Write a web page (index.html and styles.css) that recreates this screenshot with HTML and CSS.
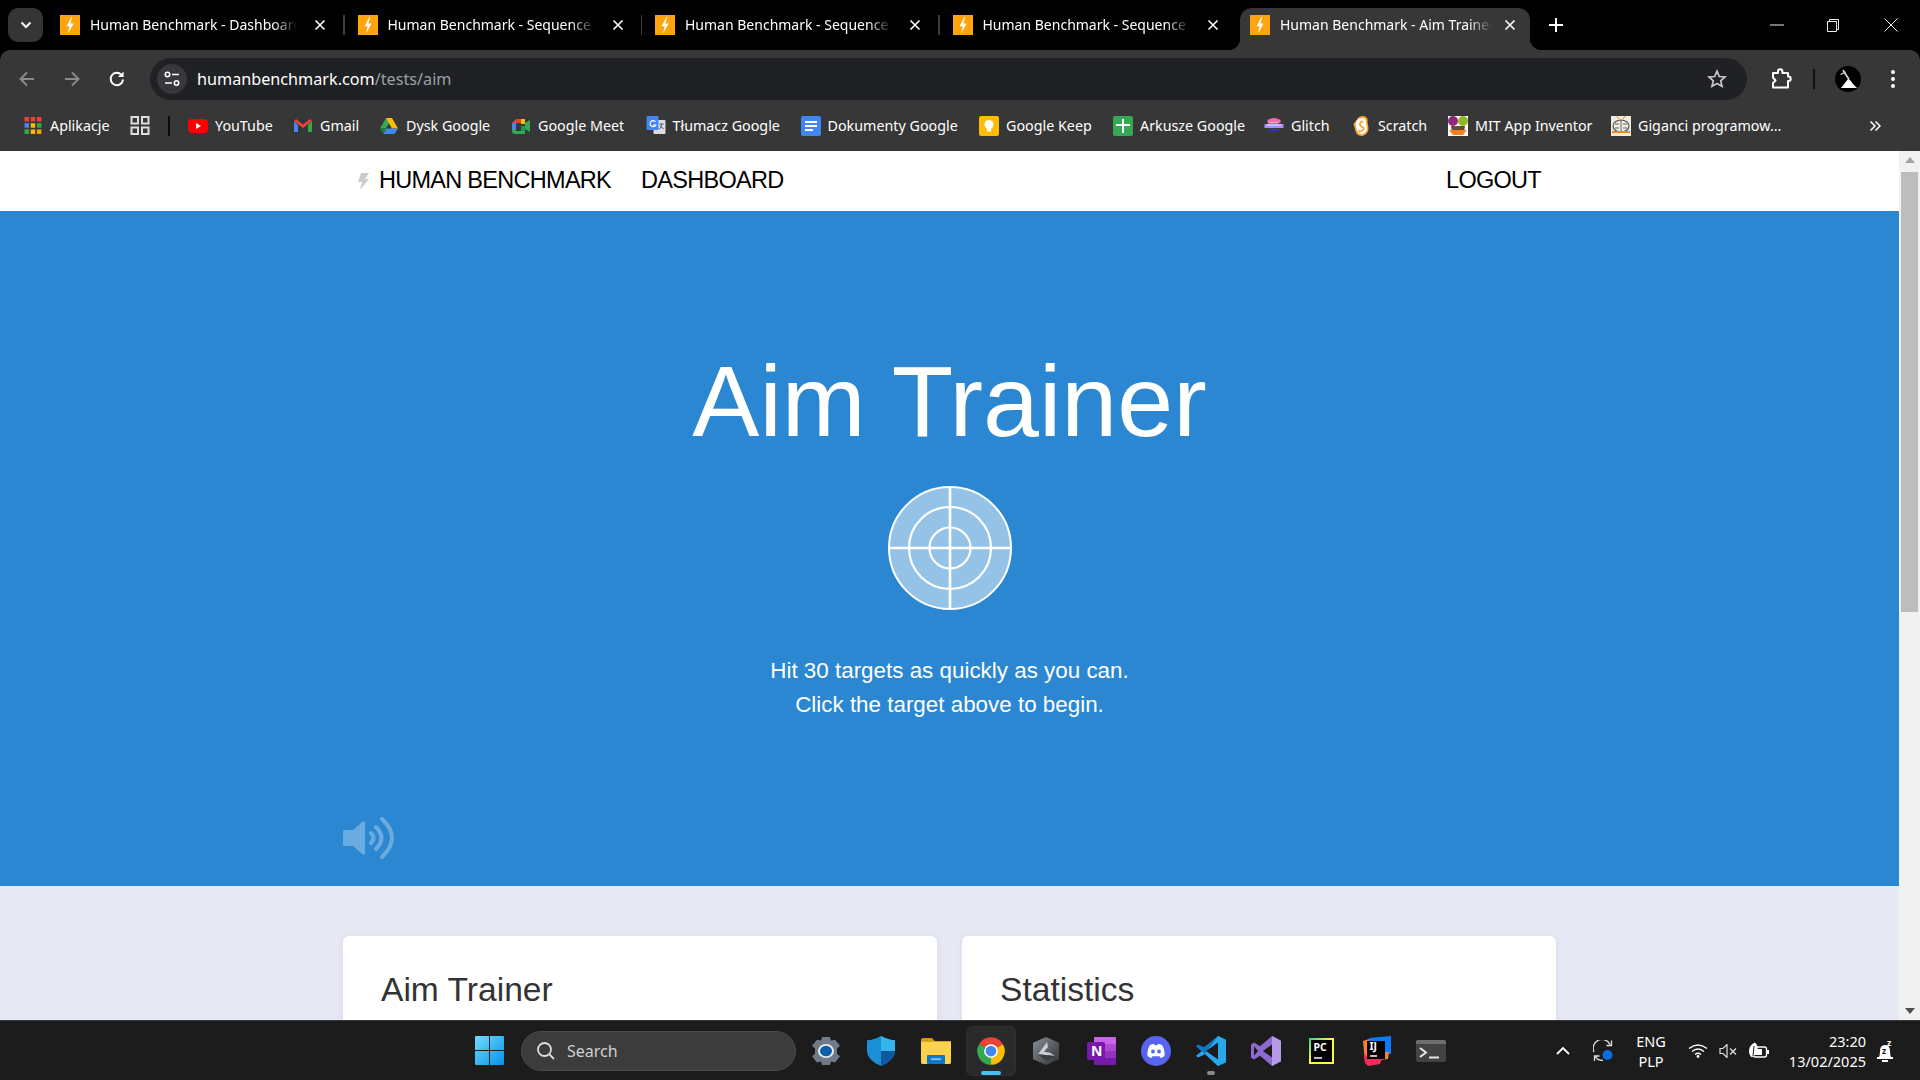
FILE: index.html
```html
<!DOCTYPE html>
<html lang="en">
<head>
<meta charset="utf-8">
<title>Aim Trainer</title>
<link rel="stylesheet" href="styles.css">
</head>
<body>
<svg class="defs" width="0" height="0" aria-hidden="true">
  <defs>
    <symbol id="fav" viewBox="0 0 20 20"><rect width="20" height="20" fill="#ffa40c"/><path d="M11.6 1.8 6.6 11.2h3L8 18.4l5.6-9.9h-3.2l1.8-6.7z" fill="#fff"/></symbol>
    <symbol id="x" viewBox="0 0 12 12"><path d="M1.5 1.5l9 9M10.5 1.5l-9 9" stroke="#fff" stroke-width="1.6" fill="none"/></symbol>
  </defs>
</svg>
<div class="screen">
  <header class="tabstrip">
    <button class="tab-menu"><svg width="12" height="8" viewBox="0 0 12 8"><path d="M1.5 1.5 6 6l4.5-4.5" stroke="#fff" stroke-width="2" fill="none"/></svg></button>
    <div class="tab sep"><svg class="fav"><use href="#fav"/></svg><span class="tab-title">Human Benchmark - Dashboard</span><svg class="tab-x"><use href="#x"/></svg></div>
    <div class="tab sep"><svg class="fav"><use href="#fav"/></svg><span class="tab-title">Human Benchmark - Sequence</span><svg class="tab-x"><use href="#x"/></svg></div>
    <div class="tab sep"><svg class="fav"><use href="#fav"/></svg><span class="tab-title">Human Benchmark - Sequence</span><svg class="tab-x"><use href="#x"/></svg></div>
    <div class="tab"><svg class="fav"><use href="#fav"/></svg><span class="tab-title">Human Benchmark - Sequence</span><svg class="tab-x"><use href="#x"/></svg></div>
    <div class="tab active"><svg class="fav"><use href="#fav"/></svg><span class="tab-title">Human Benchmark - Aim Trainer</span><svg class="tab-x"><use href="#x"/></svg></div>
    <svg class="new-tab" width="14" height="14" viewBox="0 0 14 14"><path d="M7 0v14M0 7h14" stroke="#fff" stroke-width="2"/></svg>
    <div class="winctl">
      <svg width="14" height="14" viewBox="0 0 14 14"><path d="M0 7h14" stroke="#eee" stroke-width="1"/></svg>
      <svg width="14" height="14" viewBox="0 0 14 14"><path d="M1.5 3.5h9v10h-9zM3.5 3.5v-2h9v10h-2" stroke="#eee" stroke-width="1" fill="none"/></svg>
      <svg class="win-close" width="14" height="14" viewBox="0 0 14 14"><path d="M.5.5l13 13M13.5.5l-13 13" stroke="#eee" stroke-width="1" fill="none"/></svg>
    </div>
  </header>

  <div class="toolbar">
    <svg class="nav-btn" width="18" height="18" viewBox="0 0 18 18"><path d="M16 9H3M9 2.5 2.5 9 9 15.5" stroke="#8a8a8a" stroke-width="2" fill="none"/></svg>
    <svg class="nav-btn" width="18" height="18" viewBox="0 0 18 18"><path d="M2 9h13M9 2.5 15.5 9 9 15.5" stroke="#8a8a8a" stroke-width="2" fill="none"/></svg>
    <svg class="nav-btn" width="18" height="18" viewBox="0 0 18 18"><path d="M15 9.5A6.2 6.2 0 1 1 13.2 4.6" stroke="#fff" stroke-width="2" fill="none"/><path d="M15.6 1.5v5.6H10z" fill="#fff"/></svg>
    <div class="omnibox">
      <span class="site-info"><svg width="16" height="16" viewBox="0 0 16 16"><circle cx="3.5" cy="3.5" r="2.2" stroke="#fff" stroke-width="1.6" fill="none"/><path d="M8 3.5h7M1 12h7" stroke="#fff" stroke-width="1.6"/><circle cx="12.5" cy="12" r="2.2" stroke="#fff" stroke-width="1.6" fill="none"/></svg></span>
      <span class="url"><span class="url-host">humanbenchmark.com</span><span class="url-path">/tests/aim</span></span>
      <svg class="star" width="20" height="20" viewBox="0 0 20 20"><path d="M10 2.2l2.3 5.3 5.7.5-4.3 3.8 1.3 5.6L10 14.5l-5 2.9 1.3-5.6L2 8l5.7-.5z" stroke="#c8c8c8" stroke-width="1.7" fill="none"/></svg>
    </div>
    <svg class="ext" width="22" height="22" viewBox="0 0 22 22"><path d="M3 5h5V3.500a2.200 2.200 0 0 1 4.400 0V5H18v3.500h.5a2.200 2.200 0 0 1 0 4.400H18V19.500H3v-4.500l2.500-2.500L3 9.500z" stroke="#fff" stroke-width="2" stroke-linejoin="round" fill="none"/></svg>
    <span class="tb-sep"></span>
    <svg class="avatar" width="26" height="26" viewBox="0 0 26 26"><circle cx="13" cy="13" r="13" fill="#000"/><path d="M8 4l6 9.500" stroke="#ddd" stroke-width="1.600"/><path d="M5.500 8.500l5-2.500" stroke="#ddd" stroke-width="1.200"/><path d="M6 22l4-5 3-4 2 1 3 4 4 4z" fill="#fff"/></svg>
    <svg class="dots" width="4" height="18" viewBox="0 0 4 18"><circle cx="2" cy="2" r="2" fill="#fff"/><circle cx="2" cy="9" r="2" fill="#fff"/><circle cx="2" cy="16" r="2" fill="#fff"/></svg>
  </div>

  <nav class="bookmarks">
    <a class="bm"><svg height="17" viewBox="0 0 17 17"><rect width="4.500" height="4.500" fill="#ea4335"/><rect x="6.200" width="4.500" height="4.500" fill="#ea4335"/><rect x="12.400" width="4.500" height="4.500" fill="#ea4335"/><rect y="6.200" width="4.500" height="4.500" fill="#4285f4"/><rect x="6.200" y="6.200" width="4.500" height="4.500" fill="#fbbc05"/><rect x="12.400" y="6.200" width="4.500" height="4.500" fill="#34a853"/><rect y="12.400" width="4.500" height="4.500" fill="#34a853"/><rect x="6.200" y="12.400" width="4.500" height="4.500" fill="#fbbc05"/><rect x="12.400" y="12.400" width="4.500" height="4.500" fill="#f4a300"/></svg><span>Aplikacje</span></a>
    <a class="bm"><svg height="19" viewBox="0 0 19 19"><path d="M1 1h6.500v6.500H1zM11.500 1H18v6.500h-6.500zM1 11.500h6.500V18H1zM11.500 11.500H18V18h-6.500z" stroke="#ddd" stroke-width="2" fill="none"/></svg></a>
    <span class="bm-sep"></span>
    <a class="bm"><svg height="20" viewBox="0 0 20 20"><rect y="3" width="20" height="14" rx="4" fill="#f00"/><path d="M8 7l5 3-5 3z" fill="#fff"/></svg><span>YouTube</span></a>
    <a class="bm"><svg height="18" viewBox="0 0 18 18"><path d="M0 4v11h4V8z" fill="#4285f4"/><path d="M18 4v11h-4V8z" fill="#34a853"/><path d="M0 4l9 7 9-7-2-2-7 5.500L2 2z" fill="#ea4335"/></svg><span>Gmail</span></a>
    <a class="bm"><svg height="18" viewBox="0 0 18 18"><path d="M6 1h6l-6 10.500H0z" fill="#34a853"/><path d="M6 1h6l6 10.500h-6z" fill="#fbbc05"/><path d="M3.500 17h11L18 11.500H6z" fill="#4285f4"/><path d="M0 11.500 3 17l3.500-5.500z" fill="#188038"/></svg><span>Dysk Google</span></a>
    <a class="bm"><svg height="18" viewBox="0 0 18 18"><path d="M4 2h9v4H4v6H0V6z" fill="#ea4335"/><path d="M0 6h4v6H0z" fill="#4285f4"/><path d="M0 12h4v2h9v3H3q-3 0-3-3z" fill="#34a853"/><path d="M9 2h4v5H9z" fill="#fbbc05"/><path d="M13 6l5-3v12l-5-3z" fill="#34a853"/><path d="M9 14h4v-5H9z" fill="#0f9d58"/></svg><span>Google Meet</span></a>
    <a class="bm"><svg height="19" viewBox="0 0 19 19"><rect x="7" y="4" width="12" height="14" rx="1" fill="#d9dde3"/><rect width="12" height="14" rx="1" fill="#4285f4"/><path d="M9 5.800A3 3 0 1 0 9.300 9H6.500" stroke="#fff" stroke-width="1.200" fill="none"/><path d="M13 8h4M15 8c0 3-1 4-2.500 5M14 10l3 3" stroke="#555" stroke-width="1" fill="none"/></svg><span>Tłumacz Google</span></a>
    <a class="bm"><svg height="20" viewBox="0 0 20 20"><rect width="20" height="20" rx="2" fill="#4285f4"/><path d="M4 5h12v2H4zM4 9h12v2H4zM4 13h8v2H4z" fill="#fff"/></svg><span>Dokumenty Google</span></a>
    <a class="bm"><svg height="20" viewBox="0 0 20 20"><rect width="20" height="20" rx="2" fill="#fbbc05"/><circle cx="10" cy="8.500" r="4.500" fill="#fff"/><rect x="7.800" y="12" width="4.400" height="3.500" fill="#fff"/></svg><span>Google Keep</span></a>
    <a class="bm"><svg height="20" viewBox="0 0 20 20"><rect width="20" height="20" rx="2" fill="#34a853"/><path d="M3 8h14v2H3zM9 3h2v14H9z" fill="#fff"/></svg><span>Arkusze Google</span></a>
    <a class="bm"><svg height="18" viewBox="0 0 19 18"><path d="M3 3q6-4 13 0v3H3z" fill="#f56ba8"/><path d="M0 7h19v4H0z" fill="#a68cff"/><path d="M3 12h13q-6 5-13 0z" fill="#3333cc"/><path d="M2 8h15M4 6h10" stroke="#fff" stroke-width=".8"/></svg><span>Glitch</span></a>
    <a class="bm"><svg height="20" viewBox="0 0 15 20"><path d="M3 4Q5 0 10 0q5 1 4 6l1 6q0 6-6 8-6 0-7-5L0 8z" fill="#f9a63a"/><path d="M3.500 4.500Q5 2 9.500 2q3.500 1 3 5l1 5q0 4.500-4.500 6-4.500 0-5.500-4L2 8z" fill="#fff"/><path d="M10 6Q7 5 6.500 7.500T9 11t-.5 3.500-3-.5" stroke="#f9a63a" stroke-width="1.800" fill="none"/></svg><span>Scratch</span></a>
    <a class="bm"><svg height="20" viewBox="0 0 20 20"><rect width="20" height="20" fill="#fff"/><circle cx="5" cy="5" r="5" fill="#93267f"/><circle cx="15" cy="5" r="5" fill="#8fb82b"/><path d="M3 10h14l-1 7H4z" fill="#6b4a2f"/><path d="M1 14h18l-4 5H5z" fill="#f58220"/></svg><span>MIT App Inventor</span></a>
    <a class="bm"><svg height="20" viewBox="0 0 20 20"><rect width="20" height="20" fill="#efeae2"/><ellipse cx="10" cy="10" rx="8" ry="6" fill="none" stroke="#555" stroke-width="1.200"/><path d="M10 4v12M4 8h4M12 8h4M4 12h4M12 12h4" stroke="#666" stroke-width="1"/><path d="M1 16h18" stroke="#f08a24" stroke-width="2"/><path d="M6 0l2 3M14 0l-2 3" stroke="#f08a24"/></svg><span>Giganci programow...</span></a>
    <svg class="bm-more" width="12" height="12" viewBox="0 0 12 12"><path d="M1.500 1.500 6 6l-4.500 4.500M6.500 1.500 11 6l-4.500 4.500" stroke="#fff" stroke-width="1.500" fill="none"/></svg>
  </nav>

  <div class="viewport">
    <main class="page">
      <div class="sitebar">
        <div class="wrap sitebar-in">
          <svg class="logo" width="11" height="17" viewBox="0 0 11 17"><path d="M3 0h8L7 6h4L2 17l2-8H0z" fill="#ccc"/></svg>
          <a class="sitelink brand">HUMAN BENCHMARK</a>
          <a class="sitelink">DASHBOARD</a>
          <a class="sitelink logout">LOGOUT</a>
        </div>
      </div>
      <section class="hero">
        <h1 class="hero-title">Aim Trainer</h1>
        <svg class="target" width="124" height="124" viewBox="0 0 124 124"><circle cx="62" cy="62" r="61" fill="#fff" fill-opacity=".5" stroke="#fff" stroke-width="2"/><circle cx="62" cy="62" r="41" fill="none" stroke="#fff" stroke-width="2.200"/><circle cx="62" cy="62" r="20.500" fill="none" stroke="#fff" stroke-width="2.200"/><path d="M62 0v124M0 62h124" stroke="#fff" stroke-width="2.600"/></svg>
        <p class="hero-text">Hit 30 targets as quickly as you can.<br>Click the target above to begin.</p>
        <div class="wrap sound-row">
          <svg class="sound" width="51" height="42" viewBox="0 0 51 42"><path d="M1 13h9l10-8.500q2-1 2 1.500v30q0 2.500-2 1.500L10 29H1q-1 0-1-1V14q0-1 1-1z" fill="#fff"/><path d="M28 16q5 5 0 10M33 10q11 11 0 22M39 2q20 19 0 38" stroke="#fff" stroke-width="4" stroke-linecap="round" fill="none"/></svg>
        </div>
      </section>
      <section class="cards">
        <div class="wrap cards-in">
          <article class="card"><h2>Aim Trainer</h2></article>
          <article class="card"><h2>Statistics</h2></article>
        </div>
      </section>
    </main>
    <aside class="scrollbar">
      <span class="arrow up"></span>
      <span class="thumb"></span>
      <span class="arrow down"></span>
    </aside>
  </div>

  <footer class="taskbar">
    <svg class="win" width="29" height="29" viewBox="0 0 29 29"><defs><linearGradient id="wing" x1="0" y1="0" x2="1" y2="1"><stop offset="0" stop-color="#6fdcff"/><stop offset="1" stop-color="#0b8fe6"/></linearGradient></defs><path d="M0 1q0-1 1-1h13v14H0zM15 0h13q1 0 1 1v13H15zM0 15h14v14H1q-1 0-1-1zM15 15h14v13q0 1-1 1H15z" fill="url(#wing)"/></svg>
    <div class="search"><svg width="20" height="20" viewBox="0 0 20 20"><circle cx="8.500" cy="8.500" r="6.500" stroke="#ddd" stroke-width="1.800" fill="none"/><path d="M13.500 13.500 18 18" stroke="#ddd" stroke-width="1.800"/></svg><span>Search</span></div>
    <div class="apps">
      <span class="app"><svg width="30" height="28" viewBox="0 0 30 32" preserveAspectRatio="none"><path d="M11 0h8l1 4 4-1 5 7-3 3v6l3 3-5 7-4-1-1 4h-8l-1-4-4 1-5-7 3-3v-6L1 10l5-7 4 1z" fill="#6f7b88"/><circle cx="15" cy="16" r="8" fill="#e8edf2"/><circle cx="15" cy="16" r="6" fill="#0f5ea8"/></svg></span>
      <span class="app"><svg width="28" height="30" viewBox="0 0 29 36" preserveAspectRatio="none"><path d="M14.500 0Q22 5 29 5v13q0 11-14.500 18Q0 29 0 18V5q7 0 14.500-5z" fill="#1a8fd6"/><path d="M14.500 0Q22 5 29 5v13H14.500z" fill="#36b4ec"/><path d="M14.500 18H29q0 11-14.500 18z" fill="#0e5a9e"/></svg></span>
      <span class="app"><svg width="30" height="26" viewBox="0 0 30 32" preserveAspectRatio="none"><path d="M0 2q0-2 2-2h9l3 4H0z" fill="#d99a00"/><path d="M0 4h30v26q0 2-2 2H2q-2 0-2-2z" fill="#ffd24d"/><path d="M6 22q0-1 1-1h16q1 0 1 1v10H6z" fill="#0d78c9"/><path d="M10 26h10" stroke="#bfe4ff" stroke-width="1.500"/></svg></span>
      <span class="app app-on"><svg width="30" height="30" viewBox="0 0 24 24"><path d="M12 12 2.470 6.500A11 11 0 0 1 21.530 6.500z" fill="#ea4335"/><path d="M12 12 21.530 6.500A11 11 0 0 1 12 23z" fill="#fbbc05"/><path d="M12 12 12 23A11 11 0 0 1 2.470 6.500z" fill="#34a853"/><circle cx="12" cy="12" r="5.500" fill="#fff"/><circle cx="12" cy="12" r="4.300" fill="#4285f4"/></svg><i class="run run-on"></i></span>
      <span class="app"><svg width="26" height="28" viewBox="0 0 26 34" preserveAspectRatio="none"><defs><linearGradient id="hexg" x1="0" y1="0" x2="1" y2="1"><stop offset="0" stop-color="#8a9096"/><stop offset="1" stop-color="#2f3236"/></linearGradient></defs><path d="M13 0l13 7v20l-13 7L0 27V7z" fill="url(#hexg)"/><path d="M14 6 5 21l17 2-5-4-6-1 4-6z" fill="#c9cdd2"/><path d="M5 21l9 8 8-6z" fill="#3a3d41"/></svg></span>
      <span class="app"><svg width="29" height="28" viewBox="0 0 29 28"><path d="M7 1q0-1 1-1h20q1 0 1 1v6H7z" fill="#ca64ea"/><rect x="7" y="7" width="22" height="7" fill="#ae4bd5"/><rect x="7" y="14" width="22" height="7" fill="#9332bf"/><path d="M7 21h22v6q0 1-1 1H8q-1 0-1-1z" fill="#7719aa"/><rect y="5" width="18" height="18" rx="2" fill="#7719aa"/><text x="4" y="19" class="app-n">N</text></svg></span>
      <span class="app"><svg width="30" height="30" viewBox="0 0 30 30"><circle cx="15" cy="15" r="15" fill="#5865f2"/><path d="M9 9q3-1.500 4-1l.7 1.300h2.600L17 8q1-.5 4 1 3 5 2.600 11-2 1.600-4 2l-1-1.700h-7.200l-1 1.700q-2-.4-4-2Q6 14 9 9z" fill="#fff"/><circle cx="12" cy="15.500" r="1.900" fill="#5865f2"/><circle cx="18" cy="15.500" r="1.900" fill="#5865f2"/></svg></span>
      <span class="app"><svg width="30" height="30" viewBox="0 0 30 32" preserveAspectRatio="none"><path d="M22 0l8 4v24l-8 4L0 11l2-2 6 3z" fill="#0e78c2"/><path d="M22 32l8-4V4l-8-4L8 20 2 23 0 21l6-5z" fill="#2aa6ec"/><path d="M22 7v18L10 16z" fill="#1c1c1c"/></svg><i class="run"></i></span>
      <span class="app"><svg width="30" height="30" viewBox="0 0 30 32" preserveAspectRatio="none"><path d="M21 0l9 5v22l-9 5-12-11-6 4-3-2V9l3-2 6 4z" fill="#8c6bd0"/><path d="M21 0v32l9-5V5z" fill="#b79be8"/><path d="M21 9 12 16l9 7z" fill="#1c1c1c"/><path d="M3 11v10l4-5z" fill="#1c1c1c"/></svg></span>
      <span class="app"><svg width="25" height="26" viewBox="0 0 25 26"><defs><linearGradient id="pcg" x1="0" y1="0" x2="1" y2="1"><stop offset="0" stop-color="#21d789"/><stop offset=".45" stop-color="#fcf84a"/></linearGradient></defs><rect width="25" height="26" fill="url(#pcg)"/><rect x="2" y="2" width="21" height="22" fill="#000"/><text x="4.500" y="13" class="jb-t">PC</text><path d="M5 20h8" stroke="#fff" stroke-width="1.500"/></svg></span>
      <span class="app"><svg width="29" height="30" viewBox="0 0 29 30"><path d="M7 2 29 0v18l-6 0V5H7z" fill="#087cfa"/><path d="M1 5 7 3v17l3 4-7 2z" fill="#fe7e3a"/><path d="M23 16l4 0-1 7-8 1z" fill="#fe7e3a"/><path d="M2 18l6 4 12 1-2 5-12 2-3-3z" fill="#fe2857"/><rect x="5" y="5" width="18" height="18" fill="#000"/><text x="7.500" y="14" class="jb-t">IJ</text><path d="M8 20h7" stroke="#fff" stroke-width="1.500"/></svg></span>
      <span class="app"><svg width="30" height="22" viewBox="0 0 30 22"><rect width="30" height="22" rx="2" fill="#434343"/><path d="M0 2q0-2 2-2h26q2 0 2 2v2H0z" fill="#6e6e6e"/><path d="M4 8l6 4.500L4 17" stroke="#e8e8e8" stroke-width="2" fill="none"/><path d="M13 17.500h10" stroke="#e8e8e8" stroke-width="2"/></svg></span>
    </div>
    <div class="tray">
      <span class="t t-chev"><svg width="14" height="9" viewBox="0 0 14 9"><path d="M1 8l6-6 6 6" stroke="#fff" stroke-width="1.800" fill="none"/></svg></span>
      <span class="t t-sync"><svg width="20" height="22" viewBox="0 0 20 22"><path d="M1 12A8.500 8.500 0 0 1 17 4.500M18.500.5v5h-5M10 20.500Q4 20.500 2 16M1.500 21v-5h5" stroke="#e0e0e0" stroke-width="1.300" fill="none"/><circle cx="14.500" cy="15" r="5" fill="#0a6ee0"/></svg></span>
      <span class="t t-lang"><span>ENG</span><span>PLP</span></span>
      <span class="t t-wifi"><svg width="20" height="15" viewBox="0 0 20 15"><path d="M1 5.500q9-7 18 0M4 8.500q6-5 12 0M7 11.500q3-2.500 6 0" stroke="#fff" stroke-width="1.400" fill="none"/><circle cx="10" cy="13.500" r="1.400" fill="#fff"/></svg></span>
      <span class="t t-vol"><svg width="18" height="14" viewBox="0 0 18 14"><path d="M1 4.500h3l4-4v13l-4-4H1z" stroke="#ddd" stroke-width="1.200" fill="none"/><path d="M11 4.500l6 6M17 4.500l-6 6" stroke="#ddd" stroke-width="1.300"/></svg></span>
      <span class="t t-leaf"><svg width="21" height="18" viewBox="0 0 21 18"><rect x="5.500" y="5" width="13" height="10" rx="2" stroke="#fff" stroke-width="1.300" fill="none"/><path d="M19 8h2v4h-2zM7 13h7V7H7z" fill="#fff"/><path d="M1 9Q1 3 7 .5q4 4 2 9l-2 3-3 3Q1 13 1 9z" fill="#fff"/><path d="M6 4 5 14" stroke="#1c1c1c"/></svg></span>
      <span class="t t-clock"><span>23:20</span><span>13/02/2025</span></span>
      <span class="t t-bell"><svg width="16" height="26" viewBox="0 0 16 26"><path d="M2 19q1-2 1-6 0-6 5-6t5 6q0 4 1 6z" fill="#fff"/><path d="M0 19h16v2H0zM5 22h6v2H5z" fill="#fff"/><text x="10" y="8" class="zz">z</text><text x="5" y="16" class="zz dark">z</text></svg></span>
    </div>
  </footer>
</div>
</body>
</html>
```
FILE: styles.css
```css
* { box-sizing: border-box; }
html, body { margin: 0; height: 100%; overflow: hidden; background: #000; }
.defs { position: absolute; }
.screen { width: 1920px; height: 1080px; display: flex; flex-direction: column; font-family: "Noto Sans", sans-serif; color: #fff; }

/* tab strip */
.tabstrip { height: 50px; background: #000; display: flex; align-items: flex-end; padding-left: 8px; flex: none; }
.tab-menu { width: 35px; height: 34px; margin-bottom: 8px; margin-right: 7px; border: 0; border-radius: 10px; background: #353535; display: flex; align-items: center; justify-content: center; padding: 0; }
.tab { position: relative; width: 297.5px; height: 42px; display: flex; align-items: center; padding: 0 17.5px 0 10px; flex: none; }
.tab.sep::after { content: ""; position: absolute; right: 3px; top: 7px; width: 1.500px; height: 20px; background: #3c3c3c; }
.fav { width: 20px; height: 20px; flex: none; margin-top: -8px; margin-right: 10px; }
.tab-title { width: 211px; flex: none; white-space: nowrap; overflow: hidden; font-size: 14px; line-height: 20px; margin-top: -8px; -webkit-mask-image: linear-gradient(90deg, #000 calc(100% - 28px), transparent calc(100% - 4px)); mask-image: linear-gradient(90deg, #000 calc(100% - 28px), transparent calc(100% - 4px)); }
.tab-x { width: 12px; height: 12px; margin: -8px 4px 0 auto; flex: none; }
.tab.active { width: 290px; padding-right: 10px; background: #373737; border-radius: 12px 12px 0 0; }
.tab.active .tab-title { width: 216px; }
.tab.active::before, .tab.active::after { content: ""; position: absolute; bottom: 0; width: 12px; height: 12px; }
.tab.active::before { left: -12px; background: radial-gradient(circle at 0 0, transparent 12px, #373737 12.500px); }
.tab.active::after { right: -12px; background: radial-gradient(circle at 100% 0, transparent 12px, #373737 12.500px); }
.new-tab { margin: 0 0 18px 19px; }
.winctl { margin-left: auto; display: flex; gap: 42px; margin-bottom: 18px; padding-right: 22px; }
.win-close { margin-left: 2px; }

/* toolbar */
.toolbar { height: 50px; background: #373737; flex: none; border-radius: 10px 10px 0 0; display: flex; align-items: center; padding: 8px 0 0 18px; }
.nav-btn { margin-right: 27px; flex: none; }
.toolbar .nav-btn:nth-child(3) { margin-right: 24px; }
.omnibox { width: 1597px; height: 42px; background: #202124; border-radius: 21px; display: flex; align-items: center; padding: 0 20px 0 7px; flex: none; }
.site-info { width: 30px; height: 30px; border-radius: 50%; background: #37383b; display: flex; align-items: center; justify-content: center; flex: none; }
.url { margin-left: 10px; font-size: 16.200px; white-space: nowrap; }
.url-host { color: #fff; }
.url-path { color: #9aa0a6; }
.star { margin-left: auto; }
.ext { margin-left: 23px; flex: none; }
.tb-sep { width: 2px; height: 20px; background: #111; margin-left: 21px; flex: none; }
.avatar { margin-left: 20px; flex: none; }
.dots { margin-left: 30px; flex: none; }

/* bookmarks */
.bookmarks { height: 51px; background: #373737; flex: none; display: grid; align-items: center; padding-left: 23px; grid-template-columns: 107px 38px 20px 105px 86px 132px 134.500px 155px 178.500px 134px 151px 87px 97px 163px 258px 12px; font-size: 14.300px; }
.bm { display: flex; align-items: center; gap: 7px; white-space: nowrap; min-width: 0; }
.bm svg { width: 20px; flex: none; }
.bm-sep { width: 2px; height: 20px; background: #0c0c0c; }

/* web page */
.viewport { height: 869px; display: flex; flex: none; background: #fff; overflow: hidden; }
.page { width: 1899px; flex: none; font-family: "Liberation Sans", sans-serif; color: #000; background: #e6e8f4; }
.wrap { width: 1213px; margin: 0 auto; }
.sitebar { height: 60px; background: #fff; }
.sitebar-in { height: 59px; display: flex; align-items: center; padding-left: 15px; }
.logo { flex: none; margin-right: 10px; margin-top: 1px; }
.sitelink { font-size: 23.500px; letter-spacing: -.72px; color: #000; }
.brand { margin-right: 30px; }
.logout { margin-left: auto; margin-right: 15px; }
.hero { height: 675px; background: #2b87d1; color: #fff; text-align: center; display: flex; flex-direction: column; align-items: center; }
.hero-title { margin: 133px 0 0; font-weight: 400; font-size: 100.600px; line-height: 115px; }
.target { display: block; margin-top: 27px; flex: none; }
.hero-text { margin: 44px 0 0; font-size: 22.400px; line-height: 33.600px; }
.sound-row { margin-top: auto; padding-bottom: 27px; text-align: left; }
.sound { display: block; opacity: .3; }
.cards { height: 134px; }
.cards-in { display: flex; gap: 25px; padding-top: 50px; }
.card { flex: 1; height: 260px; background: #fff; border-radius: 6px; padding: 33px 38px; box-shadow: 0 0 6px rgba(60, 70, 120, .08); }
.card h2 { margin: 0; font-weight: 400; font-size: 33.600px; line-height: 42px; color: #333; }

/* scrollbar */
.scrollbar { width: 21px; flex: none; background: #f1f1f1; display: flex; flex-direction: column; align-items: center; }
.arrow { width: 0; height: 0; border-left: 5px solid transparent; border-right: 5px solid transparent; flex: none; }
.arrow.up { border-bottom: 6px solid #a3a3a3; margin-top: 6px; }
.arrow.down { border-top: 6px solid #505050; margin-top: auto; margin-bottom: 6px; }
.thumb { width: 17px; height: 440px; background: #bdbdbd; margin-top: 9px; flex: none; }

/* taskbar */
.taskbar { height: 60px; flex: none; background: #1c1c1c; border-top: 1px solid #363636; display: flex; align-items: center; padding-left: 475px; }
.win { flex: none; margin-right: 17px; }
.search { width: 275px; height: 40px; border-radius: 20px; background: #3c3c3c; border: 1px solid #4a4a4a; display: flex; align-items: center; padding-left: 14px; gap: 11px; font-size: 16px; color: #d0d0d0; flex: none; }
.apps { display: flex; margin-left: 2.500px; flex: none; }
.app { position: relative; width: 55px; height: 50px; display: flex; align-items: center; justify-content: center; flex: none; }
.app-on::before { content: ""; position: absolute; inset: 0 2.500px; background: #2a2a2a; border: 1px solid #303030; border-radius: 6px; }
.app-on svg { position: relative; }
.run { position: absolute; bottom: 1px; left: 50%; width: 8px; height: 4px; margin-left: -4px; border-radius: 2px; background: #8a8a8a; }
.run.run-on { width: 20px; margin-left: -10px; background: #47bff5; }
.app-n { font: 700 14px "Noto Sans", sans-serif; fill: #fff; }
.jb-t { font: 700 10.500px "Noto Sans", sans-serif; fill: #fff; }
.tray { margin-left: auto; display: flex; align-items: center; padding-right: 25px; font-size: 14.500px; }
.t { display: flex; flex: none; align-items: center; justify-content: center; }
.t-chev { width: 26px; }
.t-sync { width: 26px; margin-left: 14px; }
.t-lang { width: 38px; margin-left: 16px; flex-direction: column; line-height: 20px; }
.t-wifi { width: 20px; margin-left: 18px; }
.t-vol { width: 18px; margin-left: 11px; }
.t-leaf { width: 21px; margin-left: 11px; }
.t-clock { width: 89px; margin-left: 8px; flex-direction: column; align-items: flex-end; line-height: 20px; }
.t-bell { width: 20px; margin-left: 9px; }
.zz { font: 700 8.500px "Noto Sans", sans-serif; fill: #fff; }
.zz.dark { fill: #1c1c1c; }
```
